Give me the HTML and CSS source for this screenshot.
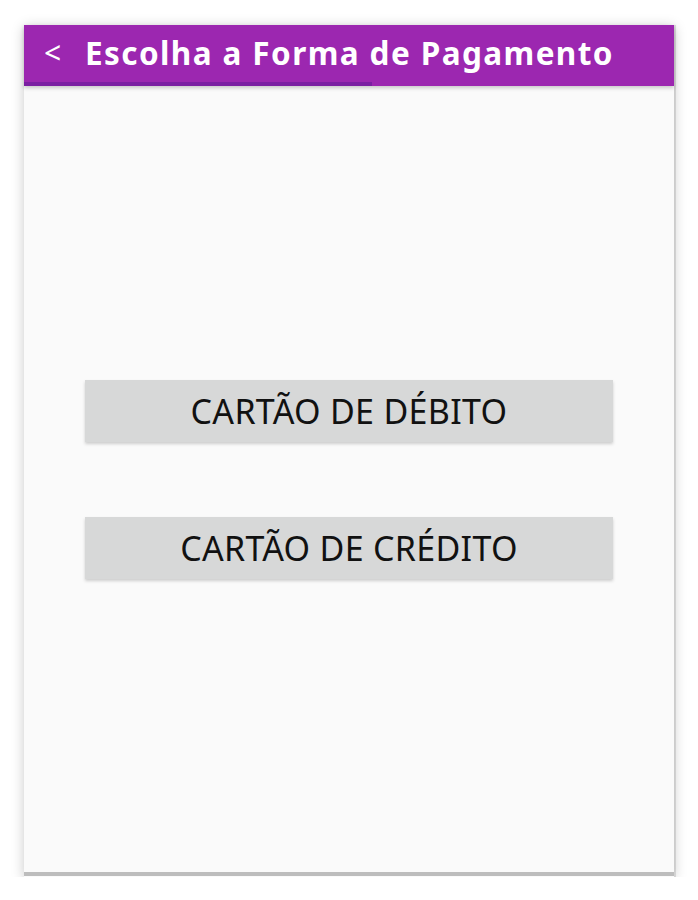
FILE: index.html
```html
<!DOCTYPE html>
<html lang="pt">
<head>
<meta charset="utf-8">
<title>Escolha a Forma de Pagamento</title>
<link rel="stylesheet" href="styles.css">
</head>
<body>
<div class="phone">
  <header class="appbar">
    <div class="appbar-row">
      <span class="back">&lt;</span>
      <h1 class="title">Escolha a Forma de Pagamento</h1>
    </div>
    <div class="progress"><div class="progress-fill"></div></div>
  </header>
  <main class="content">
    <button class="pay-btn">CARTÃO DE DÉBITO</button>
    <button class="pay-btn">CARTÃO DE CRÉDITO</button>
  </main>
  <div class="bottom-bar"></div>
</div>
</body>
</html>
```

FILE: styles.css
```css
html, body {
  margin: 0;
  padding: 0;
  background: #ffffff;
}
body {
  font-family: "Noto Sans", "Open Sans", sans-serif;
}
.phone {
  width: 650px;
  height: 852px;
  margin: 25px 0 0 24px;
  background: #fafafa;
  box-shadow: 0 2px 12px rgba(0,0,0,0.22), 2px 0 0 #e4e4e4;
  display: flex;
  flex-direction: column;
}
.appbar {
  background: #9c27b0;
  color: #ffffff;
  box-shadow: 0 2px 4px rgba(0,0,0,0.2);
  position: relative;
  z-index: 1;
}
.appbar-row {
  height: 57px;
  display: flex;
  align-items: center;
  padding-left: 20px;
}
.back {
  font-size: 30px;
  font-weight: 400;
  width: 41px;
  line-height: 1;
  margin-top: -1px;
}
.title {
  margin: 0;
  font-size: 31.5px;
  font-weight: 700;
  letter-spacing: 1.4px;
  line-height: 1;
  margin-top: -2px;
}
.progress {
  height: 4px;
  background: #9c27b0;
}
.progress-fill {
  width: 348px;
  height: 4px;
  background: #7b1fa2;
}
.content {
  flex: 1;
  display: flex;
  flex-direction: column;
  align-items: center;
  justify-content: center;
  gap: 75px;
}
.pay-btn {
  width: 528px;
  height: 62px;
  border: none;
  background: #d7d8d8;
  color: #111111;
  font-family: "Noto Sans", "Open Sans", sans-serif;
  font-size: 34px;
  letter-spacing: 0.3px;
  font-weight: 400;
  box-shadow: 0 2px 3px rgba(0,0,0,0.18);
  padding: 0;
}
.bottom-bar {
  height: 4px;
  background: #bdbdbd;
  margin-bottom: 1px;
}
```
